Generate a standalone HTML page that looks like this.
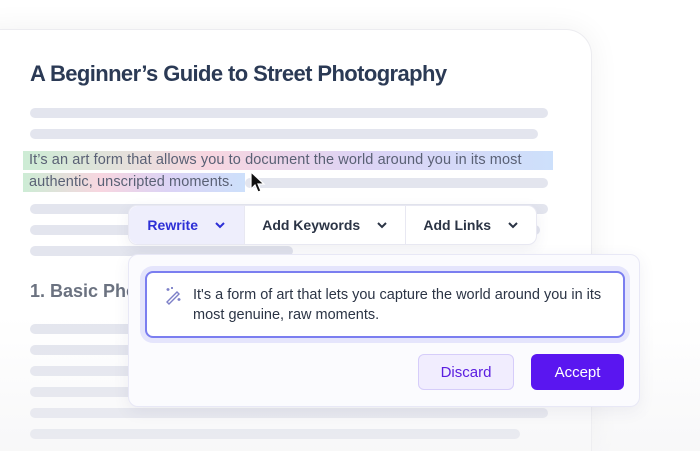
<!DOCTYPE html>
<html style="width:700px;height:451px;overflow:hidden"><head><style>
*{margin:0;padding:0;box-sizing:border-box}
body{width:700px;height:451px;overflow:hidden;background:#fff;font-family:"Liberation Sans",sans-serif;position:relative}
.card{position:absolute;left:-30px;top:29px;width:622px;height:422px;background:#fff;border:1px solid #ececf0;border-bottom:none;border-radius:26px 26px 0 0;box-shadow:0 0 30px rgba(0,0,0,0.06)}
.bar{position:absolute;left:30px;height:10px;border-radius:5px;background:#e3e5ee}
.fade{position:absolute;left:0;top:0;width:700px;height:451px;background:linear-gradient(180deg,rgba(255,255,255,0) 70%,rgba(240,240,242,0.5) 100%);pointer-events:none}
h1{position:absolute;left:30px;top:61px;font-size:22px;font-weight:bold;color:#2b3a55;letter-spacing:-0.6px}
.hl{position:absolute;left:23px;height:19px;background:linear-gradient(90deg,#cdecd5 0%,#f8d6e0 35%,#dcd3f5 65%,#cde0fb 100%);color:#5a6175;font-size:14.5px;line-height:19px;padding-left:6px;letter-spacing:0.1px}
.tb{position:absolute;left:128px;top:205px;width:409px;height:40px;background:#fff;border:1px solid #e8e8f2;border-radius:9px;box-shadow:0 4px 14px rgba(60,60,120,0.08);display:flex;font-size:14px;font-weight:bold;color:#2b3445}
.tb div{display:flex;align-items:center;justify-content:center;border-right:1px solid #e8e8f2}
.tb div:last-child{border:none}
.pop{position:absolute;left:128px;top:254px;width:512px;height:153px;background:#fbfbfe;border:1px solid #e8e8f6;border-radius:10px;box-shadow:0 4px 16px rgba(60,60,120,0.08)}
.box{position:absolute;left:16px;top:16px;width:480px;height:67px;background:#fff;border:2px solid #7b7ef0;border-radius:8px;box-shadow:0 0 0 5px #e5e5fc;font-size:14.5px;line-height:20px;color:#2b3445;padding:12px 10px 0 46px}
.btn{position:absolute;top:99px;height:36px;border-radius:6px;font-size:15px;display:flex;align-items:center;justify-content:center}
</style></head><body>
<div class="card"></div>
<h1>A Beginner’s Guide to Street Photography</h1>
<div class="bar" style="top:108px;width:518px"></div>
<div class="bar" style="top:129px;width:508px"></div>
<div class="hl" style="top:151px;width:530px">It’s an art form that allows you to document the world around you in its most</div>
<div class="bar" style="top:178px;left:245px;width:303px"></div>
<div class="hl" style="top:173px;width:222px">authentic, unscripted moments.</div>
<svg style="position:absolute;left:249px;top:171px" width="20" height="24" viewBox="0 0 20 24"><path d="M2 1 L2 18 L6 14 L9 21 L12 20 L9 13 L15 13 Z" fill="#111" stroke="#fff" stroke-width="1.2"/></svg>
<div class="bar" style="top:204px;width:518px"></div>
<div class="bar" style="top:225px;width:510px"></div>
<div class="bar" style="top:246px;width:263px"></div>
<div style="position:absolute;left:30px;top:281px;font-size:18px;font-weight:bold;color:#6b7280">1. Basic Photography</div>
<div class="bar" style="top:324px;width:518px"></div>
<div class="bar" style="top:345px;width:518px"></div>
<div class="bar" style="top:366px;width:518px"></div>
<div class="bar" style="top:387px;width:518px"></div>
<div class="bar" style="top:408px;width:518px"></div>
<div class="bar" style="top:429px;width:490px"></div>
<div class="fade"></div>
<div class="tb">
<div style="width:116px;background:#eeeefc;color:#2d2fd6;border-radius:9px 0 0 9px">Rewrite&nbsp;&nbsp;&nbsp;&nbsp;<svg width="12" height="8" viewBox="0 0 12 8"><path d="M2 2l4 4 4-4" fill="none" stroke="#2d2fd6" stroke-width="2"/></svg></div>
<div style="width:161px">Add Keywords&nbsp;&nbsp;&nbsp;&nbsp;<svg width="12" height="8" viewBox="0 0 12 8"><path d="M2 2l4 4 4-4" fill="none" stroke="#2b3445" stroke-width="2"/></svg></div>
<div style="width:130px">Add Links&nbsp;&nbsp;&nbsp;&nbsp;<svg width="12" height="8" viewBox="0 0 12 8"><path d="M2 2l4 4 4-4" fill="none" stroke="#2b3445" stroke-width="2"/></svg></div>
</div>
<div class="pop">
<div class="box">
<svg style="position:absolute;left:16px;top:12px" width="20" height="20" viewBox="0 0 20 20" fill="none" stroke="#7d80c8" stroke-width="1.4"><path d="M4 17l10-10 2 2-10 10z"/><path d="M5 3v3M3.5 4.5h3M16 13v3M14.5 14.5h3M9 2v2M8 3h2"/></svg>
It's a form of art that lets you capture the world around you in its most genuine, raw moments.</div>
<div class="btn" style="left:289px;width:96px;background:#f1edfe;border:1px solid #d6cdfa;color:#5b1ee0">Discard</div>
<div class="btn" style="left:402px;width:93px;background:#5a16f0;color:#fff">Accept</div>
</div>
</body></html>
